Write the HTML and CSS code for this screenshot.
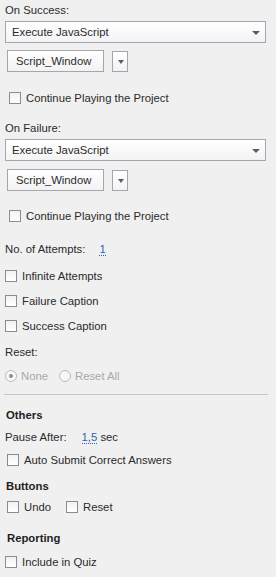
FILE: index.html
```html
<!DOCTYPE html>
<html lang="en">
<head>
    <meta charset="UTF-8">
    <title>Actions</title>
    <link rel="stylesheet" href="styles.css">
</head>
<body>
    <div class="panel">
        <div class="row label r1">On Success:</div>
        <div class="select s1">Execute JavaScript<span class="arrow"></span></div>
        <div class="script-row s2">
            <div class="script-box">Script_Window</div>
            <div class="drop-btn"><span class="arrow"></span></div>
        </div>
        <div class="row check indent c1"><span class="box"></span>Continue Playing the Project</div>

        <div class="row label r2">On Failure:</div>
        <div class="select s1">Execute JavaScript<span class="arrow"></span></div>
        <div class="script-row s3">
            <div class="script-box">Script_Window</div>
            <div class="drop-btn"><span class="arrow"></span></div>
        </div>
        <div class="row check indent c2"><span class="box"></span>Continue Playing the Project</div>

        <div class="row label r3">No. of Attempts:<span class="value v1">1</span></div>
        <div class="row check r4"><span class="box"></span>Infinite Attempts</div>
        <div class="row check r5"><span class="box"></span>Failure Caption</div>
        <div class="row check r5"><span class="box"></span>Success Caption</div>
        <div class="row label r6">Reset:</div>
        <div class="row radios r7">
            <span class="radio on"></span><span class="dim">None</span>
            <span class="radio"></span><span class="dim">Reset All</span>
        </div>
        <div class="divider"></div>

        <div class="row heading r8">Others</div>
        <div class="row label r9">Pause After:<span class="value v2">1,5</span>&nbsp;sec</div>
        <div class="row check shift r10"><span class="box"></span>Auto Submit Correct Answers</div>
        <div class="row heading r11">Buttons</div>
        <div class="row check shift r12"><span class="box"></span>Undo<span class="box gap"></span>Reset</div>
        <div class="row heading r13">Reporting</div>
        <div class="row check r14"><span class="box"></span>Include in Quiz</div>
    </div>
</body>
</html>
```

FILE: styles.css
```css
body {
    margin: 0;
    background: #f0f0f0;
    font-family: "Liberation Sans", Arial, sans-serif;
    font-size: 11.3px;
    color: #2b2b2b;
}
.panel {
    width: 276px;
    height: 577px;
}
.row {
    height: 20px;
    display: flex;
    align-items: center;
    padding-left: 5px;
}
.heading {
    font-weight: bold;
    padding-left: 6px;
    color: #1e1e1e;
}
.select {
    position: relative;
    height: 20px;
    margin-left: 5px;
    width: 253px;
    border: 1px solid #a5a5b5;
    background: linear-gradient(#ffffff, #f3f3f5);
    display: flex;
    align-items: center;
    padding-left: 6px;
}
.arrow {
    position: absolute;
    right: 5px;
    top: 9px;
    width: 0;
    height: 0;
    border-left: 4px solid transparent;
    border-right: 4px solid transparent;
    border-top: 4px solid #5a5c6c;
}
.script-row {
    display: flex;
    align-items: flex-end;
    gap: 8px;
    margin-left: 7px;
    height: 22px;
}
.script-box {
    height: 20px;
    width: 87px;
    border: 1px solid #a5a5b0;
    background: linear-gradient(#ffffff, #f2f2f4);
    display: flex;
    align-items: center;
    padding-left: 8px;
}
.drop-btn {
    position: relative;
    width: 14px;
    height: 19px;
    border: 1px solid #a5a5b0;
    background: linear-gradient(#ffffff, #f2f2f4);
}
.drop-btn .arrow {
    right: 3px;
    top: 8px;
    border-left-width: 3.5px;
    border-right-width: 3.5px;
}
.box {
    width: 10px;
    height: 10px;
    border: 1px solid #8c8c8c;
    background: linear-gradient(#f2f2f2, #ffffff);
    margin-right: 5px;
    flex: none;
}
.box.gap {
    margin-left: 15px;
}
.indent { padding-left: 9px; }
.shift { padding-left: 7px; }
.value {
    color: #2a64b8;
    border-bottom: 1px dotted #2a64b8;
    line-height: 12px;
}
.v1 { margin-left: 14px; }
.v2 { margin-left: 15px; }
.radios { color: #a9a9a9; }
.radio {
    width: 10px;
    height: 10px;
    border: 1px solid #b9b9b9;
    border-radius: 50%;
    margin-right: 4px;
    position: relative;
    background: #f8f8f8;
}
.radio.on::after {
    content: "";
    position: absolute;
    left: 3px;
    top: 3px;
    width: 4px;
    height: 4px;
    border-radius: 50%;
    background: #8e8e8e;
}
.dim { margin-right: 11px; }
.divider {
    height: 1px;
    margin: 8px 8px 0 4px;
    background: #c6c6c6;
}
.s1 { margin-top: 1px; }
.s2 { margin-top: 7px; }
.s3 { margin-top: 8px; }
.c1 { margin-top: 16px; }
.r2 { margin-top: 10px; }
.c2 { margin-top: 15px; }
.r3 { margin-top: 13px; }
.r4 { margin-top: 7px; }
.r5 { margin-top: 5px; }
.r6 { margin-top: 6px; }
.r7 { margin-top: 4px; }
.r8 { margin-top: 10px; }
.r9 { margin-top: 2px; }
.r10 { margin-top: 3px; }
.r11 { margin-top: 6px; }
.r12 { margin-top: 1px; }
.r13 { margin-top: 11px; padding-left: 7px; }
.r14 { margin-top: 4px; }
```
